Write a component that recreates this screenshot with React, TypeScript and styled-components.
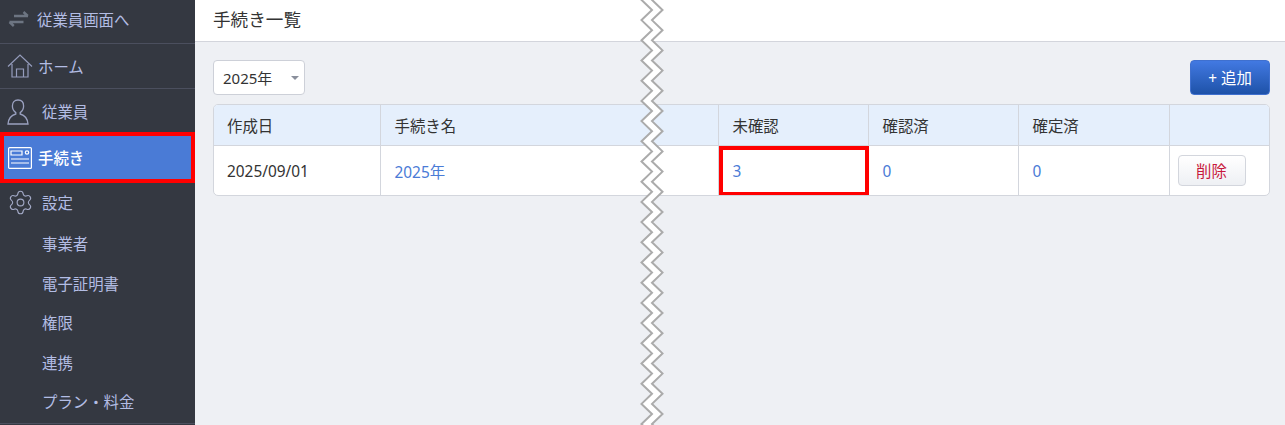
import React from 'react';
import styled, { createGlobalStyle } from 'styled-components';
import { Settings } from 'lucide-react';

const GlobalStyle = createGlobalStyle`
    html, body {
        margin: 0;
        padding: 0;
        height: 425px;
        overflow: hidden;
        background: #eef0f4;
        font-family: "Noto Sans", "Noto Sans CJK JP", sans-serif;
    }
    #root {
        height: 100%;
    }
`;

const subMenus = ['事業者', '電子証明書', '権限', '連携', 'プラン・料金'];
const columns = [166, 338, 150, 150, 151, 100];

const zigzagPoints = (offset: number) => {
    const points: string[] = [];
    for (let i = 0; i < 45; i++) {
        const y = -10.2 + i * 10.1;
        const x = (i % 2 === 0 ? 652 : 641.5) + offset;
        points.push(`${x - 630},${y}`);
    }
    return points;
};

const App = (): JSX.Element => {
    const left = zigzagPoints(0);
    const right = zigzagPoints(10.5);

    return (
        <>
            <GlobalStyle />
            <Page>
                <Sidebar>
                    <SwitchRow>
                        <svg width="22" height="16" viewBox="0 0 22 16" fill="none" stroke="#6d7582" strokeWidth="2.4">
                            <path d="M6 5h14M15.500 1l4.300 4M1.500 11h14M5.800 15l-4.300-4" />
                        </svg>
                        <span>従業員画面へ</span>
                    </SwitchRow>
                    <MenuRow $height={44} $bordered $gap={5}>
                        <svg width="26" height="24" viewBox="0 0 26 24" fill="none" stroke="#959cbc" strokeWidth="1.2">
                            <path d="M1 12.500 13 1l12 11.500M5 10v13h16V10M9.500 23v-8h7v8" />
                        </svg>
                        <span>ホーム</span>
                    </MenuRow>
                    <MenuRow $height={41} $top={2} $gap={13}>
                        <svg width="22" height="26" viewBox="0 0 22 26" fill="none" stroke="#9aa1c0" strokeWidth="1.3">
                            <path d="M11 1c3.600 0 5.600 2.600 5.600 6 0 3.200-1.700 5.400-3.400 6.600v1.400c3.600 1 7.200 3.300 7.800 10H1c.6-6.700 4.200-9 7.800-10v-1.400C7.100 12.400 5.400 10.200 5.400 7c0-3.400 2-6 5.600-6Z" />
                        </svg>
                        <span>従業員</span>
                    </MenuRow>
                    <ActiveRow>
                        <svg width="24" height="22" viewBox="0 0 24 22" fill="none" stroke="#fff" strokeWidth="1.2">
                            <rect x="0.600" y="0.600" width="22.800" height="20.800" rx="1" />
                            <path d="M3 4h11v4H3zM3 12h18M3 16h18" />
                            <circle cx="19" cy="5.500" r="1.700" />
                        </svg>
                        <span>手続き</span>
                    </ActiveRow>
                    <MenuRow $height={38} $gap={8}>
                        <Settings size={27} color="#a2a9c6" strokeWidth={1} />
                        <span>設定</span>
                    </MenuRow>
                    <SubMenu>
                        {subMenus.map((name) => (
                            <SubMenuItem key={name}>{name}</SubMenuItem>
                        ))}
                    </SubMenu>
                </Sidebar>
                <Main>
                    <TopBar>手続き一覧</TopBar>
                    <Content>
                        <Toolbar>
                            <YearSelect>
                                2025年
                                <Caret />
                            </YearSelect>
                            <AddButton>+ 追加</AddButton>
                        </Toolbar>
                        <TableWrap>
                            <Table>
                                <colgroup>
                                    {columns.map((width, i) => (
                                        <col key={i} style={{ width }} />
                                    ))}
                                </colgroup>
                                <thead>
                                    <tr>
                                        <HeadCell>作成日</HeadCell>
                                        <HeadCell>手続き名</HeadCell>
                                        <HeadCell>未確認</HeadCell>
                                        <HeadCell>確認済</HeadCell>
                                        <HeadCell>確定済</HeadCell>
                                        <HeadCell />
                                    </tr>
                                </thead>
                                <tbody>
                                    <tr>
                                        <BodyCell>2025/09/01</BodyCell>
                                        <BodyCell><LinkText>2025年</LinkText></BodyCell>
                                        <BodyCell $marked><LinkText>3</LinkText></BodyCell>
                                        <BodyCell><LinkText>0</LinkText></BodyCell>
                                        <BodyCell><LinkText>0</LinkText></BodyCell>
                                        <BodyCell $compact><DeleteButton>削除</DeleteButton></BodyCell>
                                    </tr>
                                </tbody>
                            </Table>
                        </TableWrap>
                    </Content>
                </Main>
                <BreakLine width="44" height="425" viewBox="0 0 44 425">
                    <polygon points={[...left, ...[...right].reverse()].join(' ')} fill="#fff" />
                    <polyline points={left.join(' ')} fill="none" stroke="#ababab" strokeWidth="2" />
                    <polyline points={right.join(' ')} fill="none" stroke="#ababab" strokeWidth="2" />
                </BreakLine>
            </Page>
        </>
    );
};

export default App;


const Page = styled.div`
    position: relative;
    display: flex;
    flex-direction: row;
    width: 1285px;
    height: 425px;
    overflow: hidden;
`;

const Sidebar = styled.nav`
    width: 195px;
    flex-shrink: 0;
    background: #343841;
    color: #b3bde4;
    font-size: 15.4px;
`;

const SwitchRow = styled.div`
    display: flex;
    flex-direction: row;
    align-items: center;
    gap: 7px;
    height: 44px;
    padding: 0 0 5px 8px;
    box-sizing: border-box;
    border-bottom: 1px solid #4b4f5e;
`;

const MenuRow = styled.div<{ $height: number; $bordered?: boolean; $gap: number; $top?: number }>`
    display: flex;
    flex-direction: row;
    align-items: center;
    gap: ${(props) => props.$gap}px;
    height: ${(props) => props.$height}px;
    padding: ${(props) => props.$top ?? 0}px 0 0 7px;
    border-bottom: ${(props) => (props.$bordered ? '1px solid #4b4f5e' : 'none')};
`;

const ActiveRow = styled.div`
    display: flex;
    flex-direction: row;
    align-items: center;
    gap: 6px;
    height: 51px;
    padding-left: 4px;
    box-sizing: border-box;
    background: #4a7bd6;
    border: 4px solid #f00;
    color: #fff;
    font-weight: 500;
`;

const SubMenu = styled.ul`
    list-style: none;
    margin: 0;
    padding: 4px 0 0 0;
    border-bottom: 1px solid #4b4f5e;
`;

const SubMenuItem = styled.li`
    height: 39.5px;
    line-height: 39.5px;
    padding-left: 42px;
`;

const Main = styled.main`
    flex: 1;
    display: flex;
    flex-direction: column;
    min-width: 0;
`;

const TopBar = styled.header`
    height: 42px;
    box-sizing: border-box;
    padding: 0 0 4px 18px;
    display: flex;
    align-items: center;
    background: #fff;
    border-bottom: 1px solid #d3d5dc;
    color: #333;
    font-size: 17.6px;
`;

const Content = styled.div`
    padding: 18px 15px 0 18px;
    display: flex;
    flex-direction: column;
    gap: 9px;
`;

const Toolbar = styled.div`
    display: flex;
    flex-direction: row;
    justify-content: space-between;
    align-items: center;
`;

const YearSelect = styled.div`
    position: relative;
    width: 92px;
    height: 35px;
    box-sizing: border-box;
    padding-left: 9px;
    display: flex;
    align-items: center;
    background: #fff;
    border: 1px solid #cdd0d8;
    border-radius: 4px;
    color: #333;
    font-size: 15px;
`;

const Caret = styled.span`
    position: absolute;
    right: 5px;
    top: 15px;
    border-left: 4px solid transparent;
    border-right: 4px solid transparent;
    border-top: 4px solid #8a8f9c;
`;

const AddButton = styled.button`
    width: 80px;
    height: 35px;
    border: 1px solid #3f70cf;
    border-radius: 4px;
    background: linear-gradient(#4279e2, #1e52a8);
    color: #fff;
    font-family: inherit;
    font-size: 15.4px;
    padding: 0;
`;

const TableWrap = styled.div`
    width: 1057px;
    box-sizing: border-box;
    border: 1px solid #d3d6dd;
    border-radius: 5px;
    overflow: hidden;
    background: #fff;
`;

const Table = styled.table`
    width: 100%;
    table-layout: fixed;
    border-collapse: collapse;
    color: #333;
    font-size: 15.4px;
`;

const HeadCell = styled.th`
    height: 40px;
    padding: 1px 0 0 14px;
    box-sizing: border-box;
    text-align: left;
    font-weight: 400;
    background: #e5effc;
    border-left: 1px solid #d3d6dd;
    border-bottom: 1px solid #d3d6dd;
    &:first-child {
        border-left: none;
        padding-left: 13px;
    }
`;

const BodyCell = styled.td<{ $marked?: boolean; $compact?: boolean }>`
    position: relative;
    height: 50px;
    padding: ${(props) => (props.$compact ? '0 0 0 8px' : '2px 0 0 14px')};
    box-sizing: border-box;
    border-left: 1px solid #d3d6dd;
    &:first-child {
        border-left: none;
        padding-left: 13px;
    }
    ${(props) =>
        props.$marked &&
        `&::after {
            content: '';
            position: absolute;
            top: 0;
            left: 0;
            right: -1px;
            bottom: -1px;
            border: 4px solid #f00;
        }`}
`;

const LinkText = styled.span`
    color: #4a7bd6;
`;

const DeleteButton = styled.button`
    width: 68px;
    height: 31px;
    border: 1px solid #d3d6dd;
    border-radius: 4px;
    background: linear-gradient(#fff, #eef0f4);
    color: #c8193c;
    font-family: inherit;
    font-size: 15.4px;
    padding: 0;
    display: block;
`;

const BreakLine = styled.svg`
    position: absolute;
    left: 630px;
    top: 0;
`;
